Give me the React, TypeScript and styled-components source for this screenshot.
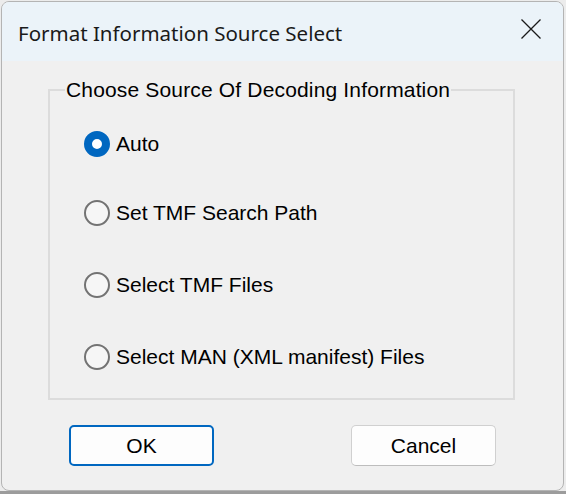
import React, { useState } from "react";
import styled, { createGlobalStyle } from "styled-components";

const Global = createGlobalStyle`
  html, body { margin: 0; padding: 0; }
  body {
    width: 566px;
    height: 494px;
    background: #e9e9e9;
    overflow: hidden;
    font-family: "Liberation Sans", Arial, sans-serif;
  }
`;

const Screen = styled.div`
  width: 566px;
  height: 494px;
  display: flex;
  flex-direction: column;
  background: linear-gradient(to bottom, #ececec 0, #ececec 491px, #9c9c9c 491px);
`;

const Window = styled.div`
  margin: 1px 0 0 1px;
  width: 563px;
  height: 490px;
  box-sizing: border-box;
  border: 1px solid #b4b4b4;
  border-radius: 8px;
  overflow: hidden;
  background: #f0f0f0;
  display: flex;
  flex-direction: column;
`;

const TitleBar = styled.div`
  height: 59px;
  flex: none;
  background: #ebf3f9;
  display: flex;
  align-items: flex-start;
  justify-content: space-between;
  padding: 0 0 0 16px;
`;

const Title = styled.div`
  font-family: "Noto Sans", "Open Sans", sans-serif;
  font-size: 20.5px;
  line-height: 28px;
  margin-top: 17px;
  color: #1a1a1a;
`;

const CloseButton = styled.div`
  width: 64px;
  height: 59px;
  display: flex;
  align-items: flex-start;
  justify-content: center;
  padding-top: 17px;
  box-sizing: border-box;
`;

const Body = styled.div`
  flex: 1;
  display: flex;
  flex-direction: column;
  padding: 17px 0 0 46px;
`;

const Group = styled.fieldset`
  margin: 0;
  width: 467px;
  height: 322px;
  box-sizing: border-box;
  border: 2px solid #dcdcdc;
  padding: 0 0 0 34px;
`;

const Legend = styled.legend`
  padding: 0 1px;
  margin-left: -19px;
  font-size: 21px;
  line-height: 24px;
  letter-spacing: 0.16px;
  color: #000;
`;

const Options = styled.div`
  display: flex;
  flex-direction: column;
  gap: 46px;
  padding-top: 29px;
`;

const Option = styled.label`
  display: flex;
  align-items: center;
  gap: 6px;
  height: 26px;
  font-size: 21px;
  color: #000;
  cursor: default;
  &:first-child {
    margin-bottom: -3px;
  }
`;

const Radio = styled.input.attrs({ type: "radio" })`
  appearance: none;
  margin: 0;
  width: 26px;
  height: 26px;
  border-radius: 50%;
  box-sizing: border-box;
  border: 2px solid #737373;
  background: #f6f6f6;
  flex: none;
  &:checked {
    border: 8px solid #0067c0;
    background: #ffffff;
  }
`;

const Buttons = styled.div`
  display: flex;
  gap: 137px;
  padding: 25px 0 0 21px;
`;

const Button = styled.button<{ $primary?: boolean }>`
  width: 145px;
  height: 41px;
  box-sizing: border-box;
  border-radius: 5px;
  background: #fdfdfd;
  border: ${(p) => (p.$primary ? "2px solid #0067c0" : "1px solid #d0d0d0")};
  border-bottom-color: ${(p) => (p.$primary ? "#0067c0" : "#bdbdbd")};
  font-family: "Liberation Sans", Arial, sans-serif;
  font-size: 21px;
  color: #000;
  padding: 0;
  display: flex;
  align-items: center;
  justify-content: center;
`;

const options = [
  "Auto",
  "Set TMF Search Path",
  "Select TMF Files",
  "Select MAN (XML manifest) Files",
];

export default function App() {
  const [sel, setSel] = useState(0);
  return (
    <>
      <Global />
      <Screen>
        <Window>
          <TitleBar>
            <Title>Format Information Source Select</Title>
            <CloseButton>
              <svg width="20" height="20" viewBox="0 0 20 20">
                <path d="M0.5 0.5 L19.5 19.5 M19.5 0.5 L0.5 19.5" stroke="#1a1a1a" strokeWidth="1.3" fill="none" />
              </svg>
            </CloseButton>
          </TitleBar>
          <Body>
            <Group>
              <Legend>Choose Source Of Decoding Information</Legend>
              <Options>
                {options.map((o, i) => (
                  <Option key={o}>
                    <Radio name="src" checked={sel === i} onChange={() => setSel(i)} />
                    {o}
                  </Option>
                ))}
              </Options>
            </Group>
            <Buttons>
              <Button $primary>OK</Button>
              <Button>Cancel</Button>
            </Buttons>
          </Body>
        </Window>
      </Screen>
    </>
  );
}
